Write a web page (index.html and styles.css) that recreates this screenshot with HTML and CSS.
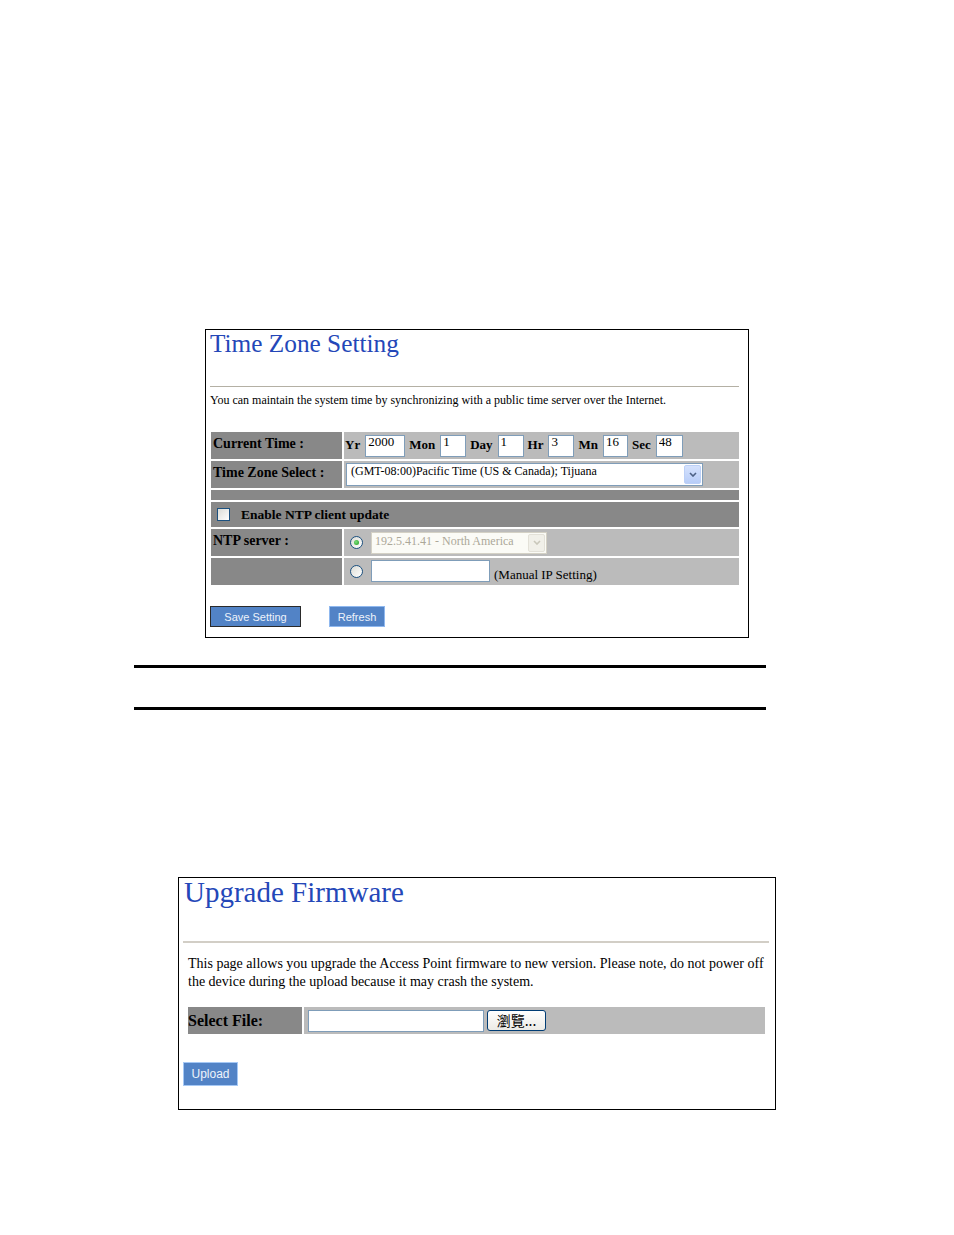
FILE: index.html
```html
<!DOCTYPE html>
<html lang="en">
<head>
<meta charset="utf-8">
<title>Time Zone Setting / Upgrade Firmware</title>
<link rel="stylesheet" href="styles.css">
</head>
<body>
<div class="page">
  <section class="panel panel-tz">
    <h1 class="title">Time Zone Setting</h1>
    <hr class="rule-thin">
    <p class="desc">You can maintain the system time by synchronizing with a public time server over the Internet.</p>
    <div class="grid">
      <div class="lbl">Current Time :</div>
      <div class="val">
        <div class="timefields">
          <span class="tl">Yr</span><input class="tin w-yr" value="2000">
          <span class="tl">Mon</span><input class="tin w-mon" value="1">
          <span class="tl">Day</span><input class="tin w-day" value="1">
          <span class="tl">Hr</span><input class="tin w-hr" value="3">
          <span class="tl">Mn</span><input class="tin w-mn" value="16">
          <span class="tl">Sec</span><input class="tin w-sec" value="48">
        </div>
      </div>
      <div class="lbl">Time Zone Select :</div>
      <div class="val">
        <div class="combo combo-tz">
          <span class="combo-text">(GMT-08:00)Pacific Time (US &amp; Canada); Tijuana</span>
          <span class="combo-btn"><svg width="8" height="5" viewBox="0 0 8 5"><polyline points="1,1 4,4 7,1" fill="none" stroke="#4d6185" stroke-width="1.6"/></svg></span>
        </div>
      </div>
      <div class="dark full sep"></div>
      <div class="dark full ntp">
        <span class="chk"></span><span class="ntp-label">Enable NTP client update</span>
      </div>
      <div class="lbl">NTP server :</div>
      <div class="val">
        <span class="radio on"></span>
        <div class="combo combo-dis">
          <span class="combo-text">192.5.41.41 - North America</span>
          <span class="combo-btn"><svg width="8" height="5" viewBox="0 0 8 5"><polyline points="1,1 4,4 7,1" fill="none" stroke="#c9c7ba" stroke-width="1.6"/></svg></span>
        </div>
      </div>
      <div class="lbl"></div>
      <div class="val val-manual">
        <span class="radio"></span>
        <input class="tin w-ip" value="">
        <span class="note">(Manual IP Setting)</span>
      </div>
    </div>
    <div class="actions">
      <button class="btn btn-default w-save">Save Setting</button>
      <button class="btn w-refresh">Refresh</button>
    </div>
  </section>

  <div class="divider d1"></div>
  <div class="divider d2"></div>

  <section class="panel panel-fw">
    <h1 class="title">Upgrade Firmware</h1>
    <hr class="rule-thick">
    <p class="fw-desc">This page allows you upgrade the Access Point firmware to new version. Please note, do not power off the device during the upload because it may crash the system.</p>
    <div class="file-row">
      <div class="file-lbl">Select File:</div>
      <div class="file-val">
        <input class="file-in" value="">
        <button class="browse">瀏覽...</button>
      </div>
    </div>
    <button class="btn btn-upload">Upload</button>
  </section>
</div>
</body>
</html>
```

FILE: styles.css
```css
* { box-sizing: border-box; }
html, body { margin: 0; padding: 0; background: #fff; }
body { font-family: "Liberation Serif", "Times New Roman", serif; color: #000; }

.page { padding-top: 329px; }

.panel { border: 1px solid #000; background: #fff; }
.panel-tz { margin-left: 205px; width: 544px; height: 309px; }
.panel-fw { margin-top: 167px; margin-left: 178px; width: 598px; height: 233px; }

.title {
  margin: 0;
  font-weight: normal;
  color: #2447b8;
  font-family: "Liberation Serif", "Times New Roman", serif;
  white-space: nowrap;
}
.panel-tz .title { font-size: 25.3px; line-height: 26px; padding-left: 4px; }
.panel-fw .title { font-size: 29px; line-height: 29px; padding-left: 5px; }

.rule-thin { margin: 30px 9px 0 4px; border: 0; border-top: 1px solid #b4b0a4; height: 0; }
.rule-thick { margin: 34px 6px 0 4px; border: 0; border-top: 2px solid #d2cec6; height: 0; }

.desc { margin: 6px 0 0 4px; font-size: 12px; line-height: 14px; white-space: nowrap; }

.grid {
  margin: 25px 0 0 5px;
  display: grid;
  grid-template-columns: 131px 395px;
  grid-template-rows: 27px 27px 10px 25px 27px 27px;
  gap: 2px;
}
.lbl {
  background: #888;
  font-weight: bold;
  font-size: 14px;
  line-height: 16px;
  display: flex;
  align-items: center;
  padding: 0 0 4px 2px;
  white-space: nowrap;
}
.val { background: #bbb; display: flex; align-items: center; padding-left: 1px; }
.dark { background: #888; }
.full { grid-column: 1 / span 2; }
.ntp { display: flex; align-items: center; padding-left: 6px; }
.ntp-label { font-weight: bold; font-size: 13.5px; margin-left: 11px; margin-top: 1px; }

.timefields { display: flex; align-items: flex-start; }
.tl { font-weight: bold; font-size: 13px; line-height: 16px; margin-top: 2px; margin-right: 5px; }
.tin {
  height: 22px;
  border: 1px solid #7f9db9;
  background: #fff;
  font-family: "Liberation Serif", "Times New Roman", serif;
  font-size: 13px;
  line-height: 12px;
  padding: 0 2px 8px 2px;
  margin: 0 4px 0 0;
  color: #000;
  outline: none;
}
.w-yr { width: 40px; }
.w-mon { width: 26px; }
.w-day { width: 26px; }
.w-hr { width: 26px; }
.w-mn { width: 25px; }
.w-sec { width: 27px; }
.w-ip { width: 119px; margin-left: 0; }

.combo {
  display: flex;
  align-items: flex-start;
  border: 1px solid #7f9db9;
  background: #fff;
  font-size: 12px;
}
.combo-text { line-height: 14px; padding-left: 4px; white-space: nowrap; }
.combo-btn {
  margin: 1px 1px 1px auto;
  align-self: stretch;
  width: 17px;
  display: flex;
  align-items: center;
  justify-content: center;
  background: linear-gradient(#d5e2fd, #b8cdf8);
  border: 1px solid #bcd0f7;
  border-radius: 2px;
}
.combo-tz { width: 357px; height: 23px; margin-left: 1px; }
.combo-dis {
  width: 176px;
  height: 22px;
  border-color: #d4d1c5;
  background: #fbfbf6;
  color: #aca899;
}
.combo-dis .combo-text { padding-left: 3px; margin-top: 1px; }
.combo-dis .combo-btn { background: #f1f0e9; border-color: #e3e1d8; }

.radio {
  width: 13px;
  height: 13px;
  border-radius: 50%;
  border: 1px solid #1c5180;
  background: linear-gradient(135deg, #dcdcd5, #fff);
  margin-left: 5px;
  margin-right: 8px;
  display: flex;
  align-items: center;
  justify-content: center;
  flex: none;
}
.radio.on::after {
  content: "";
  width: 5px;
  height: 5px;
  border-radius: 50%;
  background: radial-gradient(circle at 40% 40%, #7ee07e, #1c9a1c);
}
.val-manual { align-items: flex-end; padding-bottom: 3px; }
.val-manual .radio { align-self: center; margin-top: 3px; }
.note { font-size: 13px; line-height: 14px; margin-left: 0; white-space: nowrap; }

.chk {
  width: 13px;
  height: 13px;
  border: 1px solid #1c5180;
  background: linear-gradient(135deg, #dcdcd7, #fff);
  flex: none;
}

.actions { margin-top: 21px; padding-left: 4px; display: flex; align-items: center; gap: 28px; }
.btn {
  height: 21px;
  padding: 0;
  font-family: "Liberation Sans", Arial, sans-serif;
  font-size: 11px;
  color: #eef3fb;
  background: #5283c6;
  border: 1px solid #8fb8ef;
  cursor: pointer;
}
.btn-default { border-color: #2a2a2a; }
.w-save { width: 91px; }
.w-refresh { width: 56px; }

.divider { margin-left: 134px; width: 632px; height: 3px; background: #000; }
.d1 { margin-top: 27px; }
.d2 { margin-top: 39px; }

.fw-desc { margin: 12px 9px 0 9px; font-size: 14px; line-height: 18px; }

.file-row {
  margin: 16px 0 0 9px;
  display: grid;
  grid-template-columns: 114px 461px;
  gap: 2px;
  height: 27px;
}
.file-lbl {
  background: #888;
  font-weight: bold;
  font-size: 16px;
  line-height: 18px;
  display: flex;
  align-items: center;
  white-space: nowrap;
}
.file-val { background: #bbb; display: flex; align-items: center; padding-left: 4px; }
.file-in {
  width: 176px;
  height: 22px;
  border: 1px solid #7f9db9;
  background: #fff;
  margin: 0 3px 0 0;
  padding: 0;
}
.browse {
  width: 59px;
  height: 21px;
  padding: 0;
  border: 1px solid #003c74;
  border-radius: 3px;
  background: linear-gradient(#ffffff, #ecebe6);
  font-family: "Noto Sans CJK TC", "Liberation Serif", sans-serif;
  font-size: 14px;
  line-height: 17px;
  color: #000;
}
.btn-upload {
  display: block;
  margin: 28px 0 0 4px;
  width: 55px;
  height: 24px;
  font-size: 12px;
  border-color: #a5c8f5;
}
```
